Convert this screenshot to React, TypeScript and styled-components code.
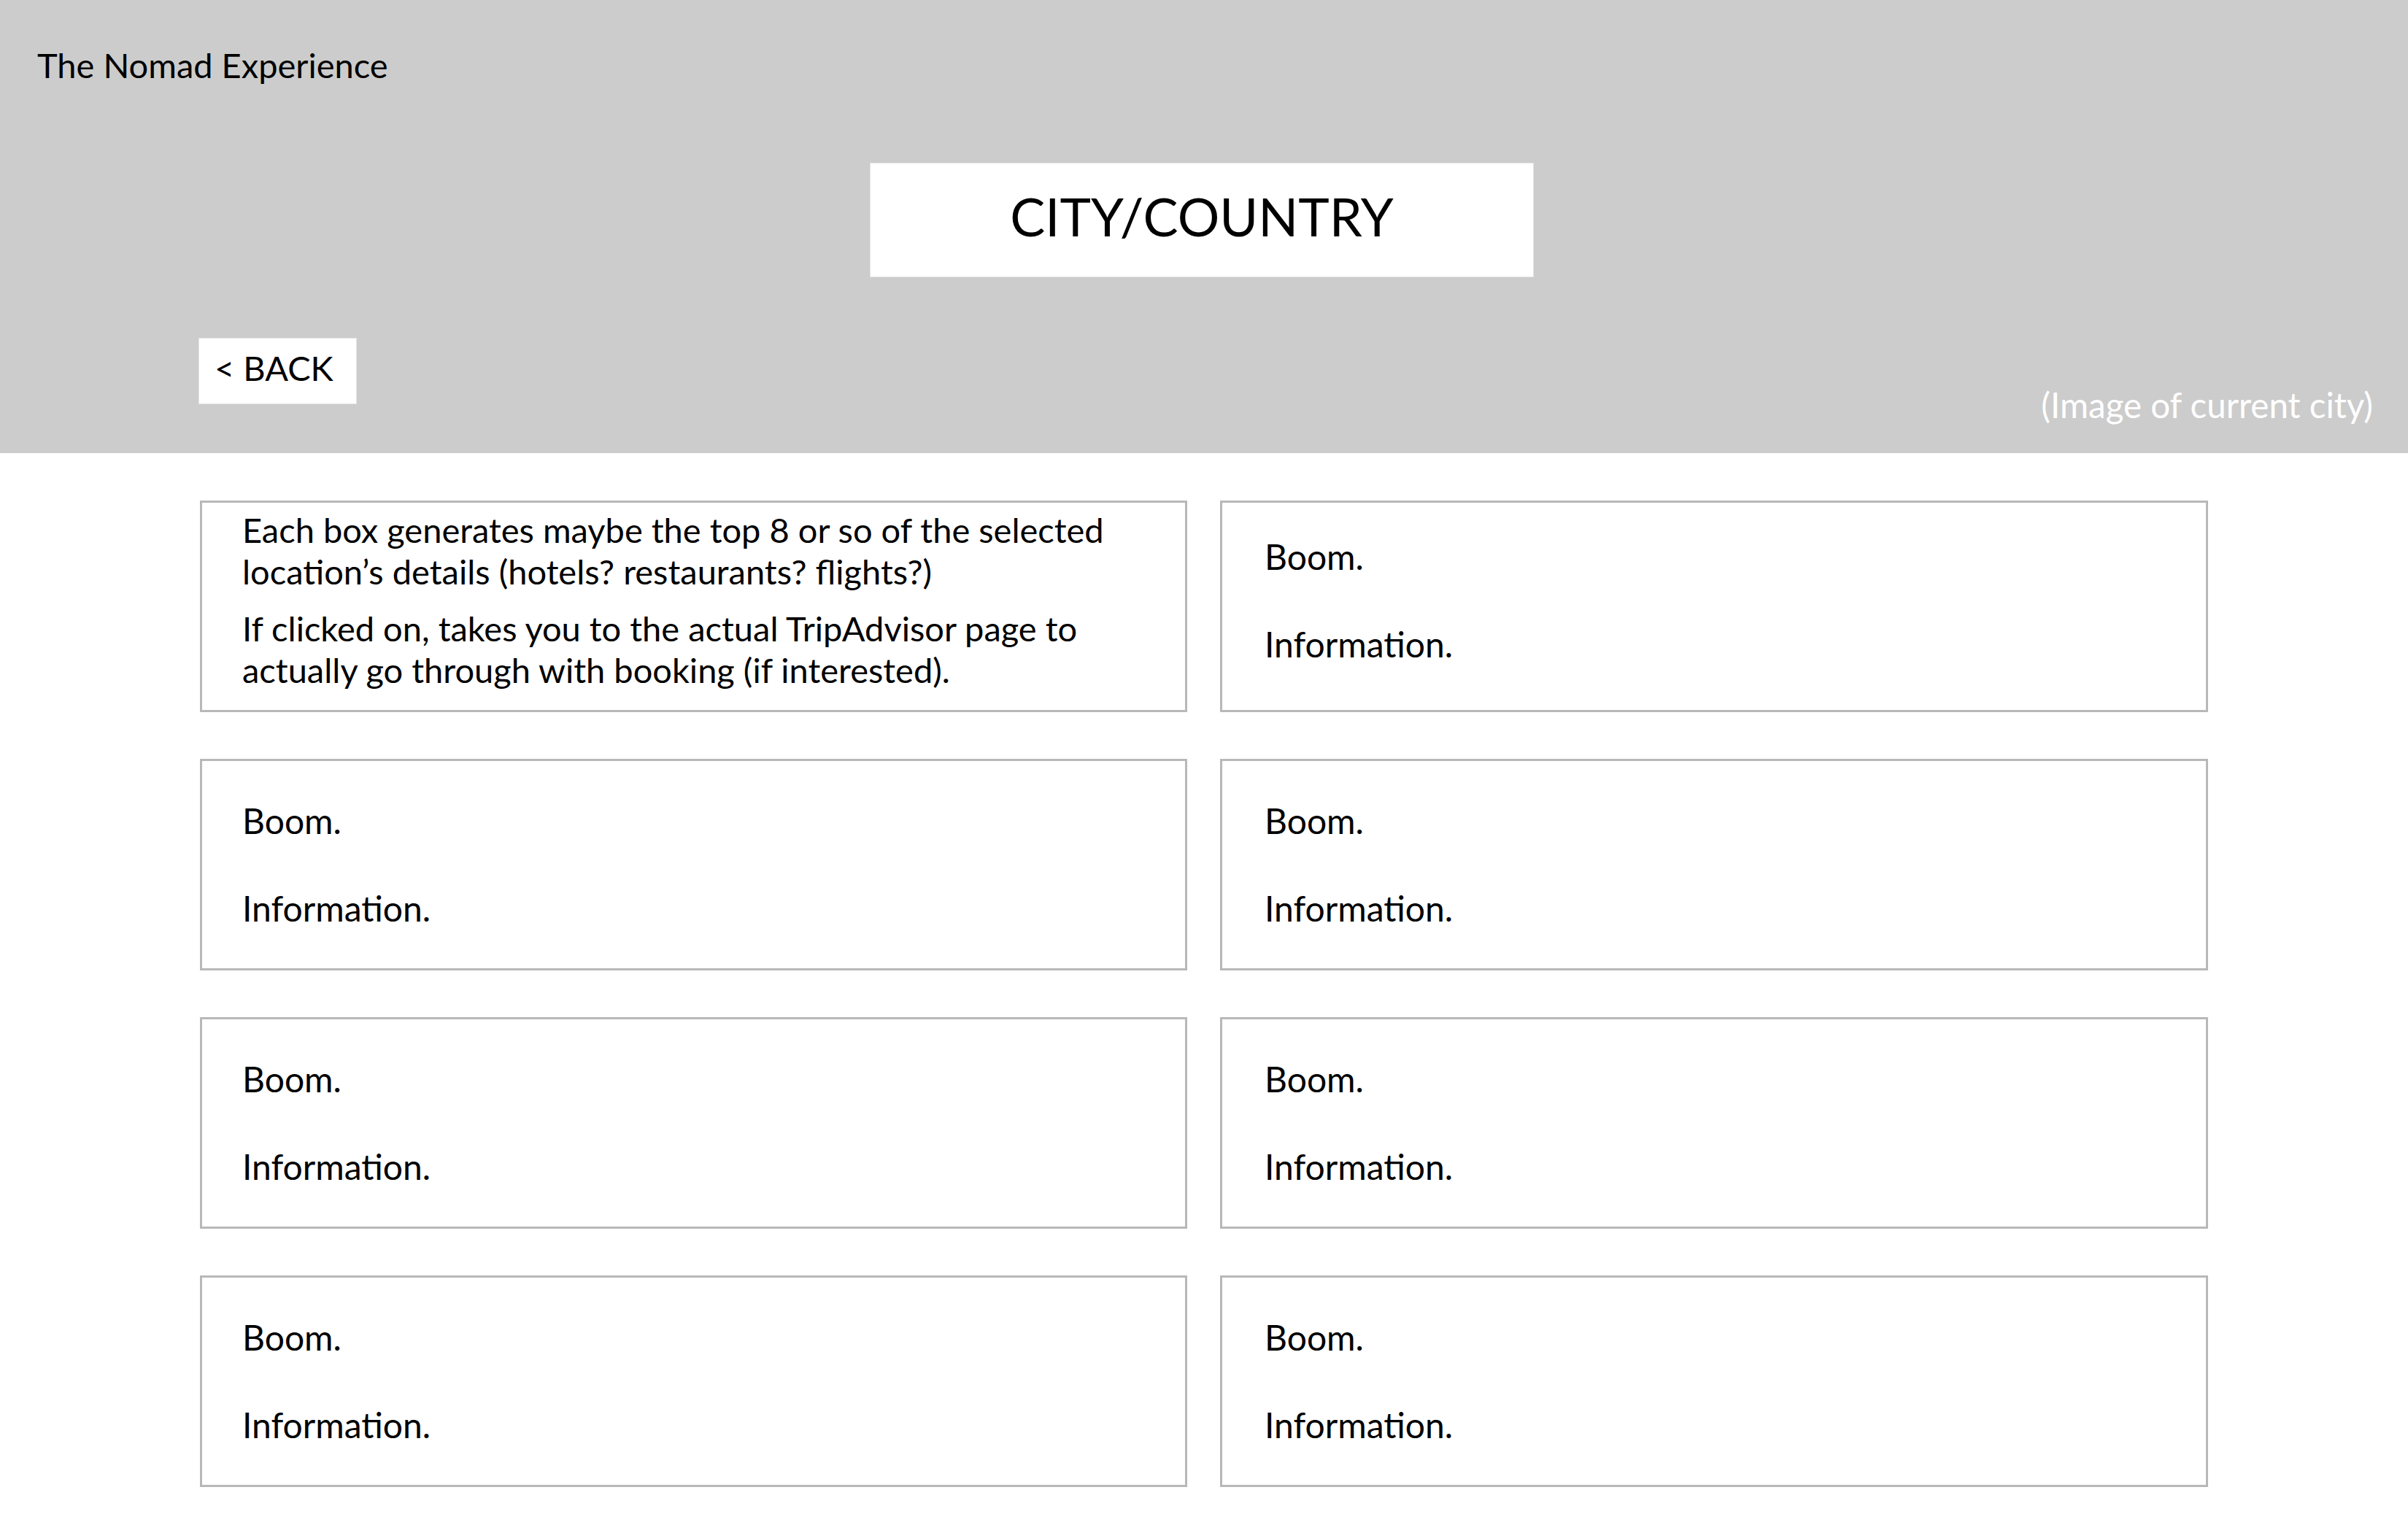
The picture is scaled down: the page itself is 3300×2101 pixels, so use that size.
import React from "react";
import styled, { createGlobalStyle } from "styled-components";

const GlobalStyle = createGlobalStyle`
  html, body {
    margin: 0;
    padding: 0;
    background: #ffffff;
  }
  body {
    font-family: Lato, "Open Sans", sans-serif;
    color: #000000;
  }
  * { box-sizing: border-box; }
`;

const Page = styled.div`
  width: 3300px;
  min-height: 2101px;
  background: #ffffff;
`;

const Header = styled.header`
  height: 621px;
  background: #cccccc;
  display: flex;
  flex-direction: column;
`;

const Brand = styled.div`
  padding: 61px 0 0 51px;
  font-size: 47px;
  line-height: 1.2;
`;

const TitleBox = styled.div`
  align-self: center;
  margin-top: 106px;
  width: 910px;
  height: 157px;
  background: #ffffff;
  border: 1px solid #e4e4e4;
  display: flex;
  align-items: center;
  justify-content: center;
  padding-bottom: 12px;
  font-size: 72px;
  line-height: 1;
  margin-left: -6px;
`;

const BottomRow = styled.div`
  margin-top: 83px;
  padding: 0 48px 0 272px;
  display: flex;
  justify-content: space-between;
  align-items: flex-start;
`;

const BackButton = styled.button`
  width: 217px;
  height: 91px;
  background: #ffffff;
  border: 1px solid #e4e4e4;
  display: flex;
  align-items: center;
  padding: 0 0 8px 21px;
  font-family: Lato, "Open Sans", sans-serif;
  font-size: 47px;
  line-height: 1;
  color: #000000;
  cursor: pointer;
`;

const Caption = styled.div`
  margin-top: 63px;
  font-size: 47.5px;
  line-height: 1.2;
  color: #ffffff;
`;

const Grid = styled.main`
  padding: 65px 0 0 274px;
  display: grid;
  grid-template-columns: 1353px 1354px;
  grid-auto-rows: 290px;
  column-gap: 45px;
  row-gap: 64px;
`;

const Card = styled.div<{ $inset: number; $lift?: number }>`
  border: 3px solid #b8b8b8;
  background: #ffffff;
  display: flex;
  flex-direction: column;
  justify-content: center;
  padding: 0 30px ${(p) => p.$lift ?? 0}px ${(p) => p.$inset}px;
`;

const Line = styled.p`
  margin: 0;
  font-size: 48px;
  line-height: 1.2;
  & + & {
    margin-top: 62px;
  }
`;

const Note = styled.p`
  margin: 0;
  font-size: 47px;
  line-height: 57px;
  white-space: nowrap;
  & + & {
    margin-top: 21px;
  }
`;

const cards = Array.from({ length: 7 });

export default function App() {
  return (
    <>
      <GlobalStyle />
      <Page>
        <Header>
          <Brand>The Nomad Experience</Brand>
          <TitleBox>CITY/COUNTRY</TitleBox>
          <BottomRow>
            <BackButton>&lt; BACK</BackButton>
            <Caption>(Image of current city)</Caption>
          </BottomRow>
        </Header>
        <Grid>
          <Card $inset={55} $lift={18}>
            <Note>
              Each box generates maybe the top 8 or so of the selected
              <br />
              location’s details (hotels? restaurants? flights?)
            </Note>
            <Note>
              If clicked on, takes you to the actual TripAdvisor page to
              <br />
              actually go through with booking (if interested).
            </Note>
          </Card>
          {cards.map((_, i) => (
            <Card key={i} $inset={i % 2 === 0 ? 58 : 55} $lift={i === 0 ? 16 : 0}>
              <Line>Boom.</Line>
              <Line>Information.</Line>
            </Card>
          ))}
        </Grid>
      </Page>
    </>
  );
}
